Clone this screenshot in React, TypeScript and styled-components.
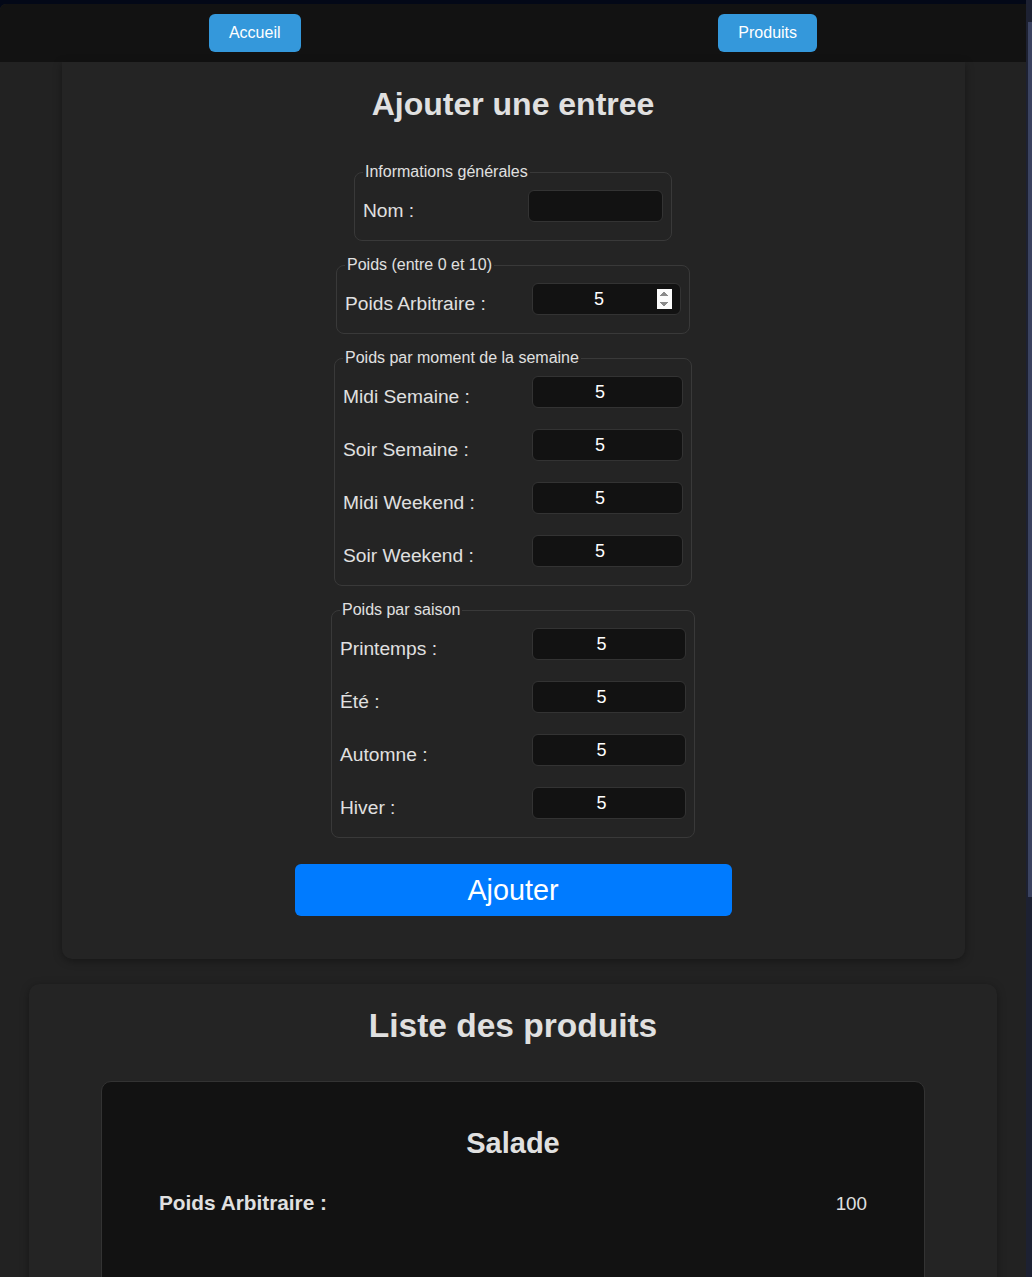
import React from "react";
import styled, { createGlobalStyle } from "styled-components";

const GlobalStyle = createGlobalStyle`
  html {
    background: #030817;
    scrollbar-width: none;
  }
  html::-webkit-scrollbar {
    display: none;
  }
  body {
    margin: 0;
    padding: 4px 6px 0 0;
    font-family: "Liberation Sans", Arial, sans-serif;
    color: #e0e0e0;
  }
`;

const ScrollTrack = styled.div`
  position: fixed;
  top: 0;
  right: 0;
  bottom: 0;
  width: 6px;
  background: #1d2132;
  display: flex;
  flex-direction: column;
  align-items: flex-end;
`;

const ScrollThumb = styled.div`
  margin-top: 22px;
  width: 4px;
  height: 875px;
  background: #3b4360;
`;

const Page = styled.div`
  background: #222222;
  border-top-left-radius: 6px;
  overflow: hidden;
  padding-bottom: 40px;
`;

const Nav = styled.nav`
  display: flex;
  justify-content: space-around;
  align-items: center;
  background: #121212;
  padding: 10px 0;
`;

const NavButton = styled.button`
  background: #3498db;
  color: #ffffff;
  border: none;
  border-radius: 6px;
  padding: 10px 20px;
  font-family: "Liberation Sans", Arial, sans-serif;
  font-size: 16px;
  line-height: 18px;
  cursor: pointer;
`;

const Card = styled.section<{ $width: number; $top: number }>`
  width: ${(p) => p.$width}px;
  margin: ${(p) => p.$top}px auto 0;
  box-sizing: border-box;
  background: #242424;
  box-shadow: 0 2px 8px rgba(0, 0, 0, 0.35);
`;

const FormCard = styled(Card)`
  padding: 24px 20px 43px;
  border-radius: 0 0 10px 10px;
`;

const ListCard = styled(Card)`
  padding: 22px 20px 40px;
  border-radius: 10px;
`;

const Title = styled.h1<{ $size: number; $gap: number }>`
  margin: 0 0 ${(p) => p.$gap}px;
  text-align: center;
  font-size: ${(p) => p.$size}px;
  line-height: ${(p) => Math.round(p.$size * 1.15)}px;
  font-weight: bold;
  color: #e0e0e0;
`;

const Form = styled.form`
  display: flex;
  flex-direction: column;
  align-items: center;
`;

const Group = styled.fieldset<{ $width: number }>`
  width: ${(p) => p.$width}px;
  box-sizing: border-box;
  margin: 0 0 15px;
  padding: 9px 8px 18px;
  border: 1px solid #393939;
  border-radius: 8px;
  display: flex;
  flex-direction: column;
  gap: 21px;

  &:last-of-type {
    margin-bottom: 26px;
  }
`;

const Legend = styled.legend`
  font-size: 16px;
  line-height: 18px;
  padding: 0 2px;
  color: #e0e0e0;
`;

const Row = styled.div`
  display: flex;
  justify-content: space-between;
  align-items: flex-end;
`;

const Label = styled.label`
  font-size: 19.2px;
  line-height: 22px;
  color: #e0e0e0;
`;

const Input = styled.input<{ $width: number; $spin?: boolean }>`
  width: ${(p) => p.$width}px;
  height: 32px;
  box-sizing: border-box;
  background: #121212;
  color: #ffffff;
  border: 1px solid #333333;
  border-radius: 6px;
  font-family: "Liberation Sans", Arial, sans-serif;
  font-size: 18px;
  font-weight: normal;
  text-align: center;
  padding: 0 8px;
  outline: none;
  color-scheme: light;

  &::-webkit-inner-spin-button,
  &::-webkit-outer-spin-button {
    opacity: ${(p) => (p.$spin ? 1 : 0)};
  }
`;

const SubmitButton = styled.button`
  width: 437px;
  height: 52px;
  background: #007bff;
  color: #ffffff;
  border: none;
  border-radius: 6px;
  font-family: "Liberation Sans", Arial, sans-serif;
  font-size: 28.8px;
  cursor: pointer;
`;

const ProductCard = styled.article`
  width: 824px;
  min-height: 720px;
  margin: 0 auto;
  box-sizing: border-box;
  background: #121212;
  border: 1px solid #333333;
  border-radius: 10px;
  padding: 45px 56px 20px;
`;

const ProductName = styled.h3`
  margin: 0 0 31px;
  text-align: center;
  font-size: 29px;
  line-height: 33px;
  font-weight: bold;
  color: #e0e0e0;
`;

const InfoRow = styled.div`
  display: flex;
  justify-content: space-between;
  align-items: baseline;
  padding: 0 1px;
`;

const InfoLabel = styled.span`
  font-size: 20.8px;
  font-weight: bold;
  color: #e0e0e0;
`;

const InfoValue = styled.span`
  font-size: 18.8px;
  color: #e0e0e0;
`;

type Field = { label: string; value: string };
type GroupDef = {
  legend: string;
  width: number;
  inputWidth: number;
  spin?: boolean;
  fields: Field[];
};

const groups: GroupDef[] = [
  {
    legend: "Informations générales",
    width: 318,
    inputWidth: 135,
    fields: [{ label: "Nom :", value: "" }],
  },
  {
    legend: "Poids (entre 0 et 10)",
    width: 354,
    inputWidth: 149,
    spin: true,
    fields: [{ label: "Poids Arbitraire :", value: "5" }],
  },
  {
    legend: "Poids par moment de la semaine",
    width: 358,
    inputWidth: 151,
    fields: [
      { label: "Midi Semaine :", value: "5" },
      { label: "Soir Semaine :", value: "5" },
      { label: "Midi Weekend :", value: "5" },
      { label: "Soir Weekend :", value: "5" },
    ],
  },
  {
    legend: "Poids par saison",
    width: 364,
    inputWidth: 154,
    fields: [
      { label: "Printemps :", value: "5" },
      { label: "Été :", value: "5" },
      { label: "Automne :", value: "5" },
      { label: "Hiver :", value: "5" },
    ],
  },
];

export default function App() {
  return (
    <>
      <GlobalStyle />
      <Page>
        <Nav>
          <NavButton>Accueil</NavButton>
          <NavButton>Produits</NavButton>
        </Nav>

        <FormCard $width={903} $top={0}>
          <Title $size={32} $gap={40}>
            Ajouter une entree
          </Title>
          <Form onSubmit={(e) => e.preventDefault()}>
            {groups.map((g) => (
              <Group key={g.legend} $width={g.width}>
                <Legend>{g.legend}</Legend>
                {g.fields.map((f) => (
                  <Row key={f.label}>
                    <Label>{f.label}</Label>
                    {f.value === "" ? (
                      <Input type="text" $width={g.inputWidth} defaultValue="" />
                    ) : (
                      <Input
                        type="number"
                        min={0}
                        max={10}
                        $width={g.inputWidth}
                        $spin={g.spin}
                        defaultValue={f.value}
                      />
                    )}
                  </Row>
                ))}
              </Group>
            ))}
            <SubmitButton type="submit">Ajouter</SubmitButton>
          </Form>
        </FormCard>

        <ListCard $width={968} $top={25}>
          <Title as="h2" $size={33.5} $gap={36}>
            Liste des produits
          </Title>
          <ProductCard>
            <ProductName>Salade</ProductName>
            <InfoRow>
              <InfoLabel>Poids Arbitraire :</InfoLabel>
              <InfoValue>100</InfoValue>
            </InfoRow>
          </ProductCard>
        </ListCard>
      </Page>
      <ScrollTrack>
        <ScrollThumb />
      </ScrollTrack>
    </>
  );
}
